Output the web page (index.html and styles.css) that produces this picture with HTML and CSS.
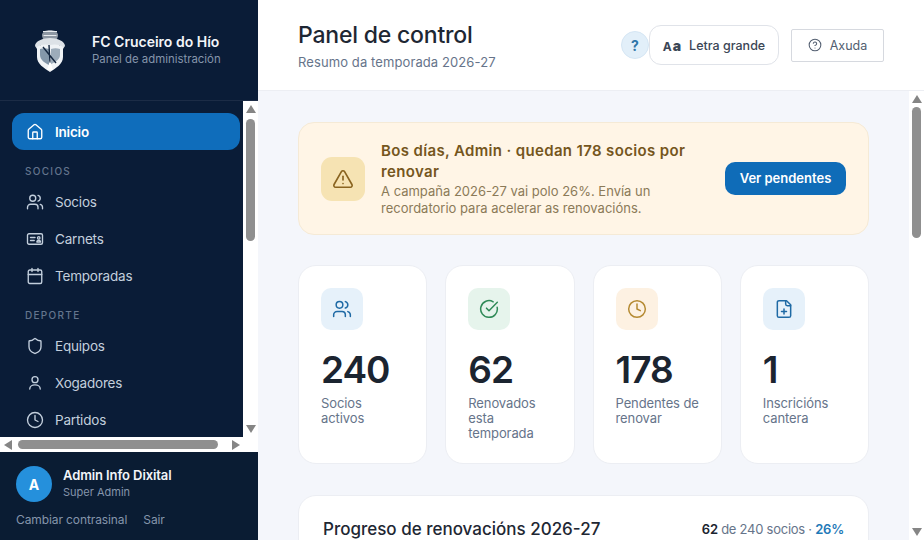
FILE: index.html
```html
<!DOCTYPE html>
<html lang="gl">
<head>
    <meta charset="UTF-8">
    <meta name="viewport" content="width=device-width, initial-scale=1.0">
    <title>Panel de control</title>
    <link rel="stylesheet" href="styles.css">
</head>
<body>
    <!-- Icons -->
    <svg class="icon-defs" aria-hidden="true">
        <symbol id="i-home" viewBox="0 0 24 24"><path d="M15 21v-8a1 1 0 0 0-1-1h-4a1 1 0 0 0-1 1v8"/><path d="M3 10a2 2 0 0 1 .709-1.528l7-5.999a2 2 0 0 1 2.582 0l7 5.999A2 2 0 0 1 21 10v9a2 2 0 0 1-2 2H5a2 2 0 0 1-2-2z"/></symbol>
        <symbol id="i-users" viewBox="0 0 24 24"><path d="M16 21v-2a4 4 0 0 0-4-4H6a4 4 0 0 0-4 4v2"/><circle cx="9" cy="7" r="4"/><path d="M16 3.128a4 4 0 0 1 0 7.744"/><path d="M22 21v-2a4 4 0 0 0-3-3.87"/></symbol>
        <symbol id="i-card" viewBox="0 0 24 24"><rect x="2" y="5" width="20" height="14" rx="2"/><path d="M6 10h6"/><path d="M6 14h5"/><circle cx="17" cy="10.5" r="1.6"/><path d="M14.5 16c0-3 5-3 5 0z"/></symbol>
        <symbol id="i-calendar" viewBox="0 0 24 24"><path d="M8 2v4"/><path d="M16 2v4"/><rect x="3" y="4" width="18" height="18" rx="2"/><path d="M3 10h18"/></symbol>
        <symbol id="i-shield" viewBox="0 0 24 24"><path d="M20 13c0 5-3.5 7.5-7.66 8.95a1 1 0 0 1-.67-.01C7.5 20.5 4 18 4 13V6a1 1 0 0 1 1-1c2 0 4.5-1.2 6.24-2.72a1.17 1.17 0 0 1 1.52 0C14.51 3.81 17 5 19 5a1 1 0 0 1 1 1z"/></symbol>
        <symbol id="i-user" viewBox="0 0 24 24"><circle cx="12" cy="7.5" r="4"/><path d="M5 20a7 5.5 0 0 1 14 0"/></symbol>
        <symbol id="i-clock" viewBox="0 0 24 24"><circle cx="12" cy="12" r="10"/><path d="M12 6v6l4 2"/></symbol>
        <symbol id="i-alert" viewBox="0 0 24 24"><path d="m21.73 18-8-14a2 2 0 0 0-3.48 0l-8 14A2 2 0 0 0 4 21h16a2 2 0 0 0 1.73-3"/><path d="M12 9v4"/><path d="M12 17h.01"/></symbol>
        <symbol id="i-check" viewBox="0 0 24 24"><path d="M21.801 10A10 10 0 1 1 17 3.335"/><path d="m9 11 3 3L22 4"/></symbol>
        <symbol id="i-file" viewBox="0 0 24 24"><path d="M15 2H6a2 2 0 0 0-2 2v16a2 2 0 0 0 2 2h12a2 2 0 0 0 2-2V7Z"/><path d="M14 2v4a2 2 0 0 0 2 2h4"/><path d="M9 15h6"/><path d="M12 18v-6"/></symbol>
        <symbol id="i-help" viewBox="0 0 24 24"><circle cx="12" cy="12" r="10"/><path d="M9.09 9a3 3 0 0 1 5.83 1c0 2-3 3-3 3"/><path d="M12 17h.01"/></symbol>
    </svg>

    <div class="app">
        <!-- Sidebar -->
        <aside class="sidebar">
            <div class="brand">
                <svg class="crest" viewBox="0 0 30 44" aria-hidden="true">
                    <path d="M7 8C6 0 24 0 23 8l-1 3H8z" fill="#8d97a3"/>
                    <path d="M8 3.5h14M8.5 7.5h13" stroke="#e6eaee" stroke-width="1.1" fill="none"/>
                    <path d="M0 18c0-5 8-8 15-8s15 3 15 8l-2 3-4-4H6l-4 4z" fill="#dde2e7"/>
                    <path d="M2 19c4-3 9-3 13-2 4-1 9-1 13 2v10c0 7-7 11-13 15C9 40 2 36 2 29z" fill="#f0f3f6"/>
                    <path d="M5 21c3-1 6-1 9 0v16c-4-2-9-5-9-10z" fill="#8497a9"/>
                    <path d="M16 21c3-1 6-1 9 0v6c0 4-4 7-9 9z" fill="#9dacba"/>
                    <path d="M8 19l13 16M14 17l1 18" stroke="#14263f" stroke-width="1.4" fill="none"/>
                    <path d="M12 42l3-9 3 9z" fill="#fff"/>
                </svg>
                <div class="brand-text">
                    <div class="brand-name">FC Cruceiro do Hío</div>
                    <div class="brand-sub">Panel de administración</div>
                </div>
            </div>

            <div class="side-scroll">
                <nav class="side-nav">
                    <a class="nav-item active" href="#"><svg class="ico"><use href="#i-home"/></svg>Inicio</a>
                    <div class="nav-label">SOCIOS</div>
                    <a class="nav-item" href="#"><svg class="ico"><use href="#i-users"/></svg>Socios</a>
                    <a class="nav-item" href="#"><svg class="ico"><use href="#i-card"/></svg>Carnets</a>
                    <a class="nav-item" href="#"><svg class="ico"><use href="#i-calendar"/></svg>Temporadas</a>
                    <div class="nav-label">DEPORTE</div>
                    <a class="nav-item" href="#"><svg class="ico"><use href="#i-shield"/></svg>Equipos</a>
                    <a class="nav-item" href="#"><svg class="ico"><use href="#i-user"/></svg>Xogadores</a>
                    <a class="nav-item" href="#"><svg class="ico"><use href="#i-clock"/></svg>Partidos</a>
                </nav>
                <div class="sb-v side-v">
                    <span class="arrow up"></span>
                    <span class="thumb"></span>
                    <span class="arrow down"></span>
                </div>
                <div class="sb-h">
                    <span class="arrow left"></span>
                    <span class="thumb"></span>
                    <span class="arrow right"></span>
                </div>
            </div>

            <div class="side-foot">
                <div class="user-row">
                    <div class="avatar">A</div>
                    <div>
                        <div class="user-name">Admin Info Dixital</div>
                        <div class="user-role">Super Admin</div>
                    </div>
                </div>
                <div class="user-links">
                    <a href="#">Cambiar contrasinal</a>
                    <a href="#">Sair</a>
                </div>
            </div>
        </aside>

        <div class="main">
            <!-- Top bar -->
            <header class="topbar">
                <div class="topbar-title">
                    <h1>Panel de control</h1>
                    <p>Resumo da temporada 2026-27</p>
                </div>
                <div class="topbar-actions">
                    <span class="help-dot">?</span>
                    <button class="btn-large"><span class="aa">A<b>a</b></span>Letra grande</button>
                    <button class="btn-help"><svg class="ico-sm"><use href="#i-help"/></svg>Axuda</button>
                </div>
            </header>

            <div class="main-body">
                <div class="content">
                    <!-- Renewal banner -->
                    <section class="banner">
                        <div class="banner-icon"><svg class="ico-md"><use href="#i-alert"/></svg></div>
                        <div class="banner-text">
                            <h2>Bos días, Admin · quedan 178 socios por renovar</h2>
                            <p>A campaña 2026-27 vai polo 26%. Envía un recordatorio para acelerar as renovacións.</p>
                        </div>
                        <button class="btn-primary">Ver pendentes</button>
                    </section>

                    <!-- Stats -->
                    <section class="stats">
                        <div class="stat-card">
                            <div class="stat-icon blue"><svg class="ico-md"><use href="#i-users"/></svg></div>
                            <div class="stat-num">240</div>
                            <div class="stat-label">Socios activos</div>
                        </div>
                        <div class="stat-card">
                            <div class="stat-icon green"><svg class="ico-md"><use href="#i-check"/></svg></div>
                            <div class="stat-num">62</div>
                            <div class="stat-label">Renovados esta temporada</div>
                        </div>
                        <div class="stat-card">
                            <div class="stat-icon amber"><svg class="ico-md"><use href="#i-clock"/></svg></div>
                            <div class="stat-num">178</div>
                            <div class="stat-label">Pendentes de renovar</div>
                        </div>
                        <div class="stat-card">
                            <div class="stat-icon blue"><svg class="ico-md"><use href="#i-file"/></svg></div>
                            <div class="stat-num">1</div>
                            <div class="stat-label">Inscricións cantera</div>
                        </div>
                    </section>

                    <!-- Progress -->
                    <section class="progress-card">
                        <div class="progress-head">
                            <h3>Progreso de renovacións 2026-27</h3>
                            <div class="progress-count"><strong>62</strong> de 240 socios · <em>26%</em></div>
                        </div>
                    </section>
                </div>
                <div class="sb-v main-v">
                    <span class="arrow up"></span>
                    <span class="thumb"></span>
                    <span class="arrow down"></span>
                </div>
            </div>
        </div>
    </div>
</body>
</html>
```

FILE: styles.css
```css
/* Global Styles */
* {
    box-sizing: border-box;
}

html,
body {
    margin: 0;
    height: 100%;
    overflow: hidden;
}

body {
    font-family: Inter, "Liberation Sans", sans-serif;
    background-color: #f4f6fb;
    color: #1b2430;
}

.icon-defs {
    display: none;
}

.app {
    display: flex;
    height: 540px;
}

.ico,
.ico-sm,
.ico-md {
    fill: none;
    stroke: currentColor;
    stroke-width: 1.8;
    stroke-linecap: round;
    stroke-linejoin: round;
    flex-shrink: 0;
}

.ico {
    width: 18px;
    height: 18px;
}

.ico-sm {
    width: 14px;
    height: 14px;
}

.ico-md {
    width: 22px;
    height: 22px;
}

/* Scrollbars */
.sb-v,
.sb-h {
    display: flex;
    align-items: center;
    background-color: #fff;
}

.sb-v {
    flex-direction: column;
    width: 15px;
    flex-shrink: 0;
    padding: 4px 0;
}

.sb-h {
    grid-column: 1 / 3;
    padding: 0 18px 0 4px;
}

.thumb {
    display: block;
    background-color: #8f8f8f;
    border-radius: 5px;
}

.sb-v .thumb {
    width: 9px;
}

.sb-h .thumb {
    width: 200px;
    height: 9px;
    margin-left: 6px;
}

.arrow {
    width: 0;
    height: 0;
    border-style: solid;
    border-color: transparent;
}

.arrow.up {
    border-width: 0 5.5px 8px;
    border-bottom-color: #858585;
}

.arrow.down {
    margin-top: auto;
    border-width: 8px 5.5px 0;
    border-top-color: #858585;
}

.arrow.left {
    border-width: 5.5px 8px 5.5px 0;
    border-right-color: #858585;
}

.arrow.right {
    margin-left: auto;
    border-width: 5.5px 0 5.5px 8px;
    border-left-color: #858585;
}

.side-v .thumb {
    height: 122px;
    margin-top: 6px;
}

.main-v .thumb {
    height: 131px;
    margin-top: 4px;
}

/* Sidebar */
.sidebar {
    width: 258px;
    flex-shrink: 0;
    display: flex;
    flex-direction: column;
    background-color: #0a1c37;
    color: #c3cfdd;
}

.brand {
    height: 101px;
    flex-shrink: 0;
    display: flex;
    align-items: center;
    gap: 27px;
    padding: 0 0 1px 35px;
    border-bottom: 1px solid #1c2c46;
}

.crest {
    width: 30px;
    height: 44px;
}

.brand-name {
    font-size: 14px;
    font-weight: 600;
    color: #f2f5f9;
    line-height: 18px;
}

.brand-sub {
    font-size: 11.4px;
    color: #8595ab;
    line-height: 15px;
    margin-top: 1px;
}

.side-scroll {
    flex: 1;
    min-height: 0;
    display: grid;
    grid-template-columns: 243px 15px;
    grid-template-rows: 336px 15px;
}

.side-nav {
    overflow: hidden;
    padding: 12px 0 0 12px;
}

.nav-item {
    display: flex;
    align-items: center;
    gap: 11px;
    width: 228px;
    height: 37px;
    padding-left: 14px;
    font-size: 13.5px;
    letter-spacing: -0.2px;
    color: #c3cfdd;
    text-decoration: none;
    border-radius: 12px;
}

.nav-item.active {
    background-color: #0f6dbb;
    color: #fff;
    font-weight: 600;
}

.nav-label {
    height: 16px;
    margin: 13px 0 4px 13px;
    font-size: 10px;
    font-weight: 500;
    line-height: 16px;
    letter-spacing: 1.3px;
    color: #64758d;
}

.side-foot {
    height: 88px;
    flex-shrink: 0;
    padding: 14px 16px 0;
    background-color: #0a1c33;
}

.user-row {
    display: flex;
    align-items: center;
    gap: 11px;
}

.avatar {
    width: 36px;
    height: 36px;
    border-radius: 50%;
    background-color: #2590dc;
    color: #fff;
    font-size: 14px;
    font-weight: 700;
    display: flex;
    align-items: center;
    justify-content: center;
}

.user-name {
    font-size: 13px;
    font-weight: 600;
    letter-spacing: -0.1px;
    color: #f2f5f9;
    line-height: 17px;
    margin-top: -2px;
}

.user-role {
    font-size: 11px;
    color: #8595ab;
    line-height: 15px;
    margin-top: 1px;
}

.user-links {
    display: flex;
    gap: 16px;
    margin-top: 10px;
}

.user-links a {
    font-size: 12px;
    letter-spacing: -0.1px;
    color: #8595ab;
    text-decoration: none;
    line-height: 16px;
}

/* Main */
.main {
    flex: 1;
    min-width: 0;
    display: flex;
    flex-direction: column;
}

.topbar {
    height: 91px;
    flex-shrink: 0;
    display: flex;
    justify-content: space-between;
    align-items: center;
    padding: 2px 40px 0;
    background-color: #fff;
    border-bottom: 1px solid #eceef3;
}

.topbar-title {
    margin-top: -2px;
}

.topbar h1 {
    margin: 0;
    font-size: 23px;
    font-weight: 500;
    letter-spacing: -0.2px;
    line-height: 30px;
    color: #1e2733;
}

.topbar p {
    margin: 4px 0 0;
    font-size: 13px;
    letter-spacing: 0.1px;
    color: #66748a;
    line-height: 17px;
}

.topbar-actions {
    display: flex;
    align-items: center;
    margin-top: -2px;
}

.help-dot {
    width: 28px;
    height: 28px;
    border-radius: 50%;
    background-color: #e2eff9;
    border: 1px solid #d5e6f4;
    color: #2f75a8;
    font-size: 14px;
    font-weight: 700;
    display: flex;
    align-items: center;
    justify-content: center;
}

.btn-large {
    width: 130px;
    height: 40px;
    display: flex;
    align-items: center;
    justify-content: center;
    gap: 7px;
    font-family: inherit;
    font-size: 12.5px;
    font-weight: 500;
    color: #3b4656;
    background-color: #fff;
    border: 1px solid #e0e3e9;
    border-radius: 12px;
}

.aa {
    font-size: 12px;
    font-weight: 700;
    letter-spacing: 1px;
}

.aa b {
    font-size: 14px;
}

.btn-help {
    width: 93px;
    height: 33px;
    margin-left: 12px;
    display: flex;
    align-items: center;
    justify-content: center;
    gap: 8px;
    font-family: inherit;
    font-size: 12.5px;
    color: #525e70;
    background-color: #fff;
    border: 1px solid #d6d9df;
    border-radius: 2px;
}

.main-body {
    flex: 1;
    min-height: 0;
    display: flex;
}

.content {
    flex: 1;
    min-width: 0;
    overflow: hidden;
    padding: 31px 40px 0;
    background-color: #f4f6fb;
}

/* Banner */
.banner {
    height: 113px;
    display: flex;
    align-items: center;
    padding: 0 22px;
    background-color: #fff5e6;
    border: 1px solid #f5ead6;
    border-radius: 16px;
}

.banner-icon {
    width: 44px;
    height: 44px;
    flex-shrink: 0;
    margin-right: 16px;
    display: flex;
    align-items: center;
    justify-content: center;
    background-color: #f6e3b3;
    border-radius: 11px;
    color: #8a6420;
}

.banner-text {
    flex: 1;
    padding-right: 30px;
}

.banner-text h2 {
    margin: 0;
    font-size: 15px;
    font-weight: 600;
    letter-spacing: 0.35px;
    line-height: 21px;
    color: #75561d;
}

.banner-text p {
    margin: 1px 0 0;
    font-size: 13px;
    line-height: 17px;
    color: #8b7a58;
}

.btn-primary {
    width: 121px;
    height: 33px;
    flex-shrink: 0;
    padding: 0 0 2px;
    font-family: inherit;
    font-size: 13px;
    font-weight: 600;
    color: #fff;
    background-color: #0f6cb8;
    border: none;
    border-radius: 10px;
}

/* Stats */
.stats {
    display: grid;
    grid-template-columns: repeat(4, 1fr);
    gap: 18px;
    margin-top: 30px;
}

.stat-card {
    height: 199px;
    padding: 22px 18px 0 22px;
    background-color: #fff;
    border: 1px solid #eceef3;
    border-radius: 18px;
}

.stat-icon {
    width: 42px;
    height: 42px;
    display: flex;
    align-items: center;
    justify-content: center;
    border-radius: 10px;
}

.stat-icon .ico-md {
    width: 20px;
    height: 20px;
}

.stat-icon.blue {
    background-color: #e6f1fa;
    color: #1f6aa5;
}

.stat-icon.green {
    background-color: #e6f4ec;
    color: #2f8a57;
}

.stat-icon.amber {
    background-color: #fdf1e2;
    color: #b58a32;
}

.stat-num {
    margin-top: 17px;
    font-size: 37px;
    font-weight: 600;
    letter-spacing: -1px;
    line-height: 46px;
    color: #1b2430;
}

.stat-label {
    margin-top: 3px;
    font-size: 13px;
    letter-spacing: -0.1px;
    line-height: 15px;
    color: #66748a;
}

/* Progress */
.progress-card {
    height: 200px;
    margin-top: 31px;
    padding: 22px 24px;
    background-color: #fff;
    border: 1px solid #eceef3;
    border-radius: 18px;
}

.progress-head {
    display: flex;
    justify-content: space-between;
    align-items: center;
}

.progress-head h3 {
    margin: 0;
    font-size: 17px;
    font-weight: 500;
    line-height: 22px;
    color: #1e2733;
}

.progress-count {
    font-size: 13px;
    letter-spacing: -0.25px;
    color: #66748a;
}

.progress-count strong {
    font-weight: 600;
    color: #1b2430;
}

.progress-count em {
    font-style: normal;
    font-weight: 600;
    color: #1f7ab8;
}
```
